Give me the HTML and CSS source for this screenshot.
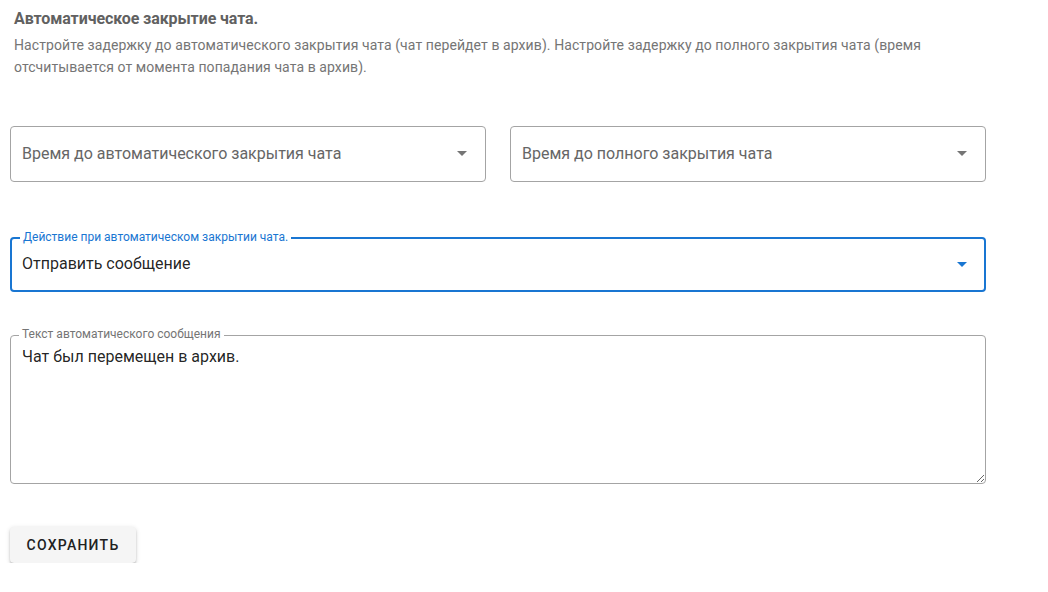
FILE: index.html
```html
<!DOCTYPE html>
<html lang="ru">
<head>
<meta charset="utf-8">
<link rel="stylesheet" href="styles.css">
</head>
<body>
<div class="page">
  <div class="title">Автоматическое закрытие чата.</div>
  <div class="desc">Настройте задержку до автоматического закрытия чата (чат перейдет в архив). Настройте задержку до полного закрытия чата (время отсчитывается от момента попадания чата в архив).</div>

  <div class="row">
    <div class="field">
      <span class="placeholder">Время до автоматического закрытия чата</span>
      <svg class="arrow" viewBox="0 0 24 24" width="24" height="24"><path d="M7 10l5 5 5-5z"/></svg>
    </div>
    <div class="field">
      <span class="placeholder">Время до полного закрытия чата</span>
      <svg class="arrow" viewBox="0 0 24 24" width="24" height="24"><path d="M7 10l5 5 5-5z"/></svg>
    </div>
  </div>

  <div class="field focused wide">
    <span class="label">Действие при автоматическом закрытии чата.</span>
    <span class="value">Отправить сообщение</span>
    <svg class="arrow" viewBox="0 0 24 24" width="24" height="24"><path d="M7 10l5 5 5-5z"/></svg>
  </div>

  <div class="area-wrap">
    <span class="label">Текст автоматического сообщения</span>
    <textarea class="area">Чат был перемещен в архив.</textarea>
  </div>

  <button class="save">Сохранить</button>
</div>
</body>
</html>
```

FILE: styles.css
```css
* { box-sizing: border-box; }
html, body { margin: 0; padding: 0; background: #fff; }
body {
  font-family: Roboto, "Noto Sans", "Liberation Sans", sans-serif;
  color: rgba(0,0,0,0.87);
}
.page {
  width: 976px;
  margin-left: 10px;
  padding-top: 8px;
}
.title {
  font-size: 16px;
  line-height: 22px;
  font-weight: 700;
  letter-spacing: -0.1px;
  color: #616161;
  padding-left: 4px;
}
.desc {
  margin-top: 4px;
  font-size: 14px;
  line-height: 22px;
  letter-spacing: 0.085px;
  color: #757575;
  padding-left: 4px;
}
.row {
  margin-top: 48px;
  display: flex;
  gap: 24px;
}
.field {
  position: relative;
  flex: 1;
  height: 56px;
  border: 1px solid #a4a4a4;
  border-radius: 4px;
  display: flex;
  align-items: center;
  padding: 0 11px 2px 11px;
  font-size: 16px;
}
.field .placeholder { flex: 1; color: #666; }
.field .value { flex: 1; color: rgba(0,0,0,0.87); }
.arrow { fill: #757575; flex: none; }
.field.focused {
  margin-top: 55px;
  height: 55px;
  border: 2px solid #1976d2;
  padding: 0 10px 2px 10px;
}
.field.focused .arrow { fill: #1976d2; }
.label {
  position: absolute;
  top: -8px;
  left: 9px;
  padding: 0 3px;
  background: #fff;
  font-size: 12px;
  line-height: 14px;
  color: #757575;
  white-space: nowrap;
}
.field.focused .label { color: #1976d2; top: -9px; left: 8px; }
.area-wrap {
  position: relative;
  margin-top: 43px;
}
.area {
  display: block;
  width: 100%;
  height: 149px;
  border: 1px solid #a4a4a4;
  border-radius: 4px;
  padding: 11px 11px;
  font-family: inherit;
  font-size: 16px;
  line-height: 20px;
  color: rgba(0,0,0,0.87);
  outline: none;
  resize: vertical;
}
.save {
  display: block;
  margin-top: 43px;
  height: 36px;
  width: 126px;
  border: none;
  border-radius: 4px;
  background: #f5f5f5;
  font-family: inherit;
  font-size: 14px;
  font-weight: 500;
  letter-spacing: 1.25px;
  text-transform: uppercase;
  color: #212121;
  box-shadow: 0 3px 1px -2px rgba(0,0,0,0.25), 0 2px 2px 0 rgba(0,0,0,0.18), 0 1px 5px 0 rgba(0,0,0,0.14);
  padding: 0;
}
```
